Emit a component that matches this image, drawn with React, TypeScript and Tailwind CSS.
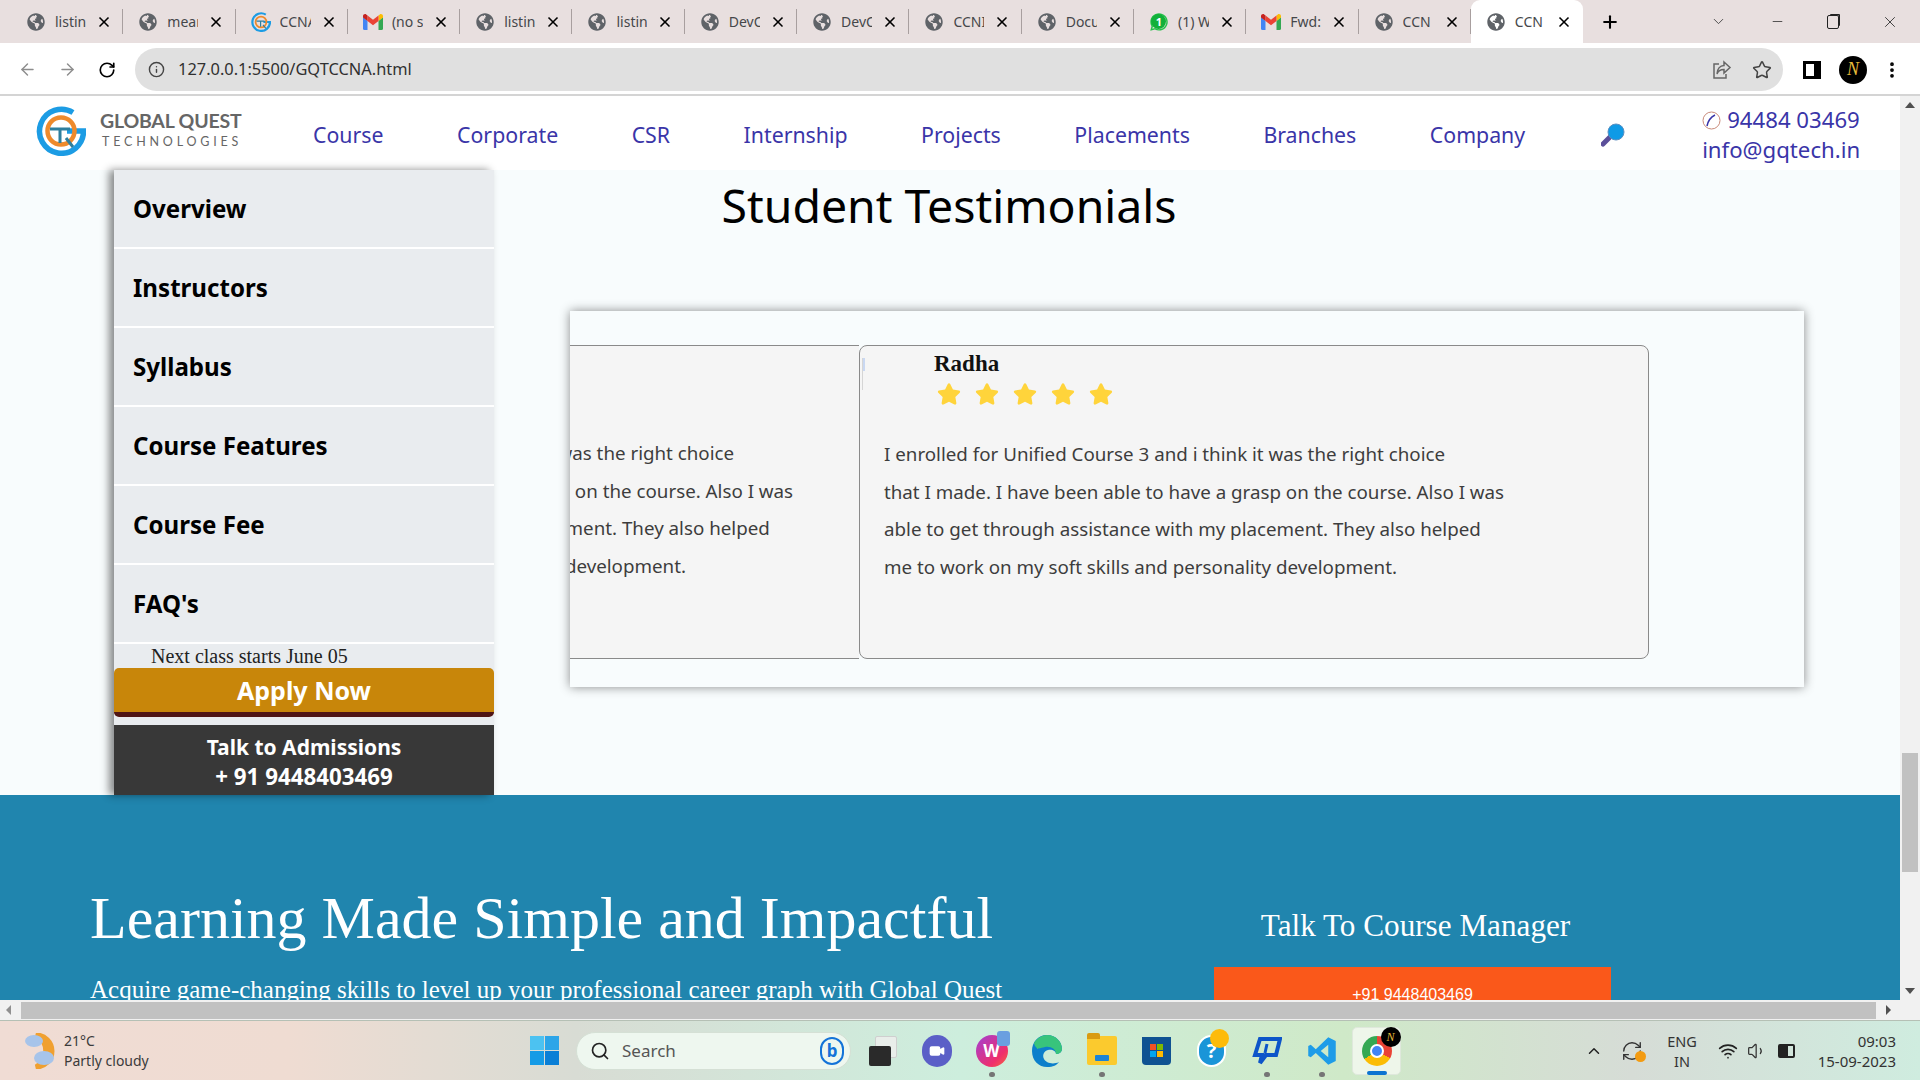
import { FaGlobeAmericas, FaStar, FaWhatsapp } from "react-icons/fa";
import { ArrowLeft, ArrowRight, RotateCw, Info, Star, ChevronDown, Minus, X, Plus, Search, Wifi, Volume1, ChevronUp, RefreshCw, MoreVertical, Video } from "lucide-react";
import { ReactNode } from "react";

const sans = "font-['Noto_Sans',sans-serif]";
const serif = "font-['Liberation_Serif',serif]";

type TTab = { title: string; icon?: "gq" | "gmail" | "wa"; active?: boolean };

const tabs: TTab[] = [
  { title: "listing" },
  { title: "mean" },
  { title: "CCNA", icon: "gq" },
  { title: "(no su", icon: "gmail" },
  { title: "listing" },
  { title: "listing" },
  { title: "DevO" },
  { title: "DevO" },
  { title: "CCNI" },
  { title: "Docu" },
  { title: "(1) W", icon: "wa" },
  { title: "Fwd:", icon: "gmail" },
  { title: "CCN" },
  { title: "CCN", active: true },
];

const menu = ["Overview", "Instructors", "Syllabus", "Course Features", "Course Fee", "FAQ's"];
const links = ["Course", "Corporate", "CSR", "Internship", "Projects", "Placements", "Branches", "Company"];
const lines = [
  "I enrolled for Unified Course 3 and i think it was the right choice",
  "that I made. I have been able to have a grasp on the course. Also I was",
  "able to get through assistance with my placement. They also helped",
  "me to work on my soft skills and personality development.",
];

function GqLogo({ size }: { size: number }) {
  return (
    <svg width={size} height={size} viewBox="0 0 50 50" fill="none">
      <path d="M37 6.500A22 22 0 1 0 47.500 25H31" stroke="#1c9ce4" strokeWidth="5.500" />
      <circle cx="25" cy="25" r="13.500" stroke="#ee8a2c" strokeWidth="4.500" />
      <path d="M14 23H34M24 23V37M30 32L37 41" stroke="#2f7f9e" strokeWidth="3" />
    </svg>
  );
}

function GmailIcon() {
  return (
    <svg width="20" height="16" viewBox="0 0 20 16">
      <path d="M0 3V14.500A1.500 1.500 0 0 0 1.500 16H4.500V7L0 3Z" fill="#4285f4" />
      <path d="M20 3V14.500A1.500 1.500 0 0 1 18.500 16H15.500V7L20 3Z" fill="#34a853" />
      <path d="M15.500 1.500V7L20 3.500V2C20 .5 18 -.5 16.800 .5L15.500 1.500Z" fill="#fbbc04" />
      <path d="M4.500 7V1.500L10 5.700L15.500 1.500V7L10 11.200L4.500 7Z" fill="#ea4335" />
      <path d="M0 3.500V2C0 .5 2 -.5 3.200 .5L4.500 1.500V7L0 3.500Z" fill="#c5221f" />
    </svg>
  );
}

function TabIcon({ icon }: { icon?: TTab["icon"] }) {
  if (icon === "gq") return <GqLogo size={20} />;
  if (icon === "gmail") return <GmailIcon />;
  if (icon === "wa")
    return (
      <span className="relative flex items-center justify-center w-5 h-5">
        <FaWhatsapp className="absolute w-5 h-5 text-[#25c34a]" />
        <span className="relative w-[15px] h-[15px] rounded-full bg-[#12b03a] text-white text-[11px] leading-[15px] text-center font-bold">1</span>
      </span>
    );
  return <FaGlobeAmericas className="w-[18px] h-[18px] text-[#5f6368]" />;
}

function Tab({ title, icon, active }: TTab) {
  return (
    <div className={`relative flex items-center w-[112.300px] pl-[15px] shrink-0 ${active ? "h-full bg-white rounded-t-[9px]" : "h-[25px] border-r border-[#a89f9f]"}`}>
      <span className="flex justify-center w-[20px] shrink-0">
        <TabIcon icon={icon} />
      </span>
      <span className="ml-[9px] w-[31px] overflow-hidden whitespace-nowrap text-[14px] text-[#45474a]">{title}</span>
      <X className="ml-[10px] w-[16px] h-[16px] text-black" strokeWidth={2.500} />
    </div>
  );
}

function Card({ first }: { first?: boolean }) {
  return (
    <div
      className={
        first
          ? "shrink-0 w-[711px] ml-[-422px] h-[314px] bg-[#f5f5f5] border-y border-[#8a8a8a] pl-[25px] pt-[88px]"
          : "relative shrink-0 w-[790px] h-[314px] bg-[#f5f5f5] border border-[#8a8a8a] rounded-[8px] pl-[24px]"
      }
    >
      {!first && (
        <div className="pl-[50px] pt-[4px] h-[89px]">
          <p className={`${serif} text-[23px] leading-[28px] font-bold text-[#111]`}>Radha</p>
          <div className="flex gap-[14px] mt-[4px] pl-[3px]">
            {[1, 2, 3, 4, 5].map((s) => (
              <FaStar key={s} className="w-[24px] h-[24px] text-[#ffd43b]" />
            ))}
          </div>
          <span className="absolute left-[2px] top-[12px] w-[3px] h-[32px] border-l border-[#d5d5d5] bg-[linear-gradient(#c9d8f2_40%,#f5f5f5_40%)]" />
        </div>
      )}
      {lines.map((l) => (
        <p key={l} className={`${sans} whitespace-nowrap text-[18.750px] leading-[37.700px] text-[#3d3d3d]`}>
          {l}
        </p>
      ))}
    </div>
  );
}

function Tray({ w, children }: { w: string; children: ReactNode }) {
  return <div className={`flex flex-col items-center justify-center shrink-0 ${w}`}>{children}</div>;
}

function App({ dot, active, children }: { dot?: boolean; active?: boolean; children: ReactNode }) {
  return (
    <div className="relative flex items-center justify-center w-[55px] h-[48px] shrink-0">
      {active && <span className="absolute left-[3px] w-[49px] h-[48px] rounded-[5px] bg-[#eef6ea] border border-[#dfe8dc]" />}
      <span className="relative">{children}</span>
      {dot && <span className="absolute bottom-[-2px] w-[6px] h-[5px] rounded-full bg-[#757575]" />}
      {active && <span className="absolute bottom-[0px] w-[20px] h-[4px] rounded-full bg-[#0b74d1]" />}
    </div>
  );
}

export default function Page() {
  return (
    <div className={`${sans} flex flex-col w-[1920px] h-screen overflow-hidden bg-white`}>
      {/* tab strip */}
      <div className="flex items-center h-[43px] bg-[#e8dfdf] pl-[11px] shrink-0">
        <div className="flex items-center h-full">
          {tabs.map((t, i) => (
            <Tab key={i} {...t} />
          ))}
        </div>
        <Plus className="ml-[17px] w-[20px] h-[20px] text-black" strokeWidth={2.500} />
        <ChevronDown className="ml-[90px] w-[17px] h-[17px] text-[#444]" strokeWidth={1.300} />
        <Minus className="ml-[43px] w-[15px] h-[15px] text-[#333]" strokeWidth={1.300} />
        <span className="ml-[42px] w-[12px] h-[14px] border border-[#222] rounded-[2px] shadow-[2px_-2px_0_-1px_#222]" />
        <X className="ml-[42px] w-[18px] h-[18px] text-[#333]" strokeWidth={1.200} />
      </div>

      {/* address bar */}
      <div className="flex items-center h-[53px] border-b-2 border-[#d4d4d4] pt-[2px] shrink-0">
        <ArrowLeft className="ml-[18px] w-[19px] h-[19px] text-[#8d8d8d]" strokeWidth={1.800} />
        <ArrowRight className="ml-[21px] w-[19px] h-[19px] text-[#8d8d8d]" strokeWidth={1.800} />
        <RotateCw className="ml-[21px] w-[18px] h-[18px] text-black" strokeWidth={2.200} />
        <div className="flex items-center ml-[19px] w-[1648px] h-[43px] rounded-full bg-[#e0e0e0] pl-[13px] shrink-0">
          <Info className="w-[17px] h-[17px] text-[#444]" strokeWidth={2} />
          <span className="ml-[13px] text-[16.400px] text-[#303030]">127.0.0.1:5500/GQTCCNA.html</span>
          <svg className="ml-auto" width="20" height="20" viewBox="0 0 20 20" fill="none" stroke="#666" strokeWidth="1.500">
            <path d="M7 4H2V18H14V14" />
            <path d="M12 2L18 7.500L12 13V9.500C8 9.500 6 11 5 14C5 9 8 5.500 12 5.500V2Z" />
          </svg>
          <Star className="ml-[20px] mr-[11px] w-[20px] h-[20px] text-[#444]" strokeWidth={1.800} />
        </div>
        <span className="ml-[20px] w-[18px] h-[18px] border-[3px] border-black border-r-[7px] bg-white" />
        <span className={`${serif} ml-[18px] flex items-center justify-center w-[28px] h-[28px] rounded-full bg-black text-[#e7bb3b] text-[18px] italic`}>N</span>
        <MoreVertical className="ml-[15px] w-[20px] h-[20px] text-black" strokeWidth={2.500} />
      </div>

      {/* page + vertical scrollbar */}
      <div className="flex flex-1 min-h-0">
        <div className="flex flex-col flex-1 min-w-0 overflow-hidden bg-[#f8fcfd]">
          <header className="flex items-center h-[74px] pt-[3px] shrink-0 bg-white">
            <div className="flex items-center ml-[36px] w-[277px] shrink-0 -mt-[7px]">
              <GqLogo size={50} />
              <div className="ml-[14px] mb-[4px] font-['Lato',sans-serif] text-[#666]">
                <p className="text-[19.500px] leading-[26px] font-bold tracking-[-0.2px]">GLOBAL QUEST</p>
                <p className="text-[12.500px] leading-[16px] tracking-[3.800px] ml-[2px] whitespace-nowrap">TECHNOLOGIES</p>
              </div>
            </div>
            <nav className="flex items-center gap-[73.500px] text-[21.300px] text-[#3a35a8]">
              {links.map((l) => (
                <a key={l}>{l}</a>
              ))}
            </nav>
            <svg className="ml-[76px] shrink-0" width="24" height="24" viewBox="0 0 24 24">
              <path d="M10 13L2 21" stroke="#5b4f9a" strokeWidth="5" strokeLinecap="round" />
              <circle cx="15" cy="9" r="8" fill="#0f9ae6" stroke="#5b8fc0" strokeWidth="1" />
            </svg>
            <div className="ml-[77px] mt-[1px] text-[#3a35a8] text-[22.200px] leading-[30px]">
              <p className="flex items-center whitespace-nowrap">
                <svg className="mr-[6px]" width="19" height="19" viewBox="0 0 19 19" fill="none">
                  <circle cx="9.500" cy="9.500" r="8.500" stroke="#c98a7a" strokeWidth="1" />
                  <path d="M13 4C9 6 6 10 5 15" stroke="#3a35a8" strokeWidth="1.500" />
                </svg>
                94484 03469
              </p>
              <p>info@gqtech.in</p>
            </div>
          </header>

          <div className="flex h-[625px] shrink-0">
            <aside className="relative z-10 ml-[114px] w-[380px] shrink-0 bg-[#e9ecef] shadow-[-5px_0_8px_rgba(0,0,0,0.45)] flex flex-col">
              {menu.map((m) => (
                <div key={m} className="flex items-center h-[79px] pl-[19px] pt-[2px] border-b-2 border-white text-[24.100px] font-bold text-black shrink-0">
                  {m}
                </div>
              ))}
              <p className={`${serif} h-[24px] pl-[37px] text-[20px] leading-[24px] text-[#222] whitespace-nowrap`}>Next class starts June 05</p>
              <button className="h-[49px] pt-[2px] shrink-0 rounded-[5px] bg-[#c8860a] border-b-[5px] border-[#4f1515] text-[25px] font-bold text-white">Apply Now</button>
              <div className="mt-[8px] flex-1 bg-[#383838] text-center text-white leading-[30px] font-bold pt-[7px]">
                <p className="text-[21px]">Talk to Admissions</p>
                <p className="text-[22.300px]">+ 91 9448403469</p>
              </div>
            </aside>
            <section className="flex-1 min-w-0 pl-[76px]">
              <h2 className="w-[910px] -ml-[76px] mt-[4px] h-[137px] text-center text-[46.400px] leading-[62px] text-black">Student Testimonials</h2>
              <div className="flex w-[1234px] h-[376px] overflow-hidden bg-[#f8fcfd] pt-[34px] shadow-[0_0_10px_rgba(0,0,0,0.45)]">
                <Card first />
                <Card />
              </div>
            </section>
          </div>

          <footer className={`${serif} flex flex-1 bg-[#2085ae] text-white overflow-hidden`}>
            <div className="ml-[90px] w-[1124px] shrink-0 pt-[87px]">
              <h1 className="text-[60px] leading-[72px] whitespace-nowrap">Learning Made Simple and Impactful</h1>
              <p className="mt-[22px] text-[25px] leading-[28px] whitespace-nowrap">Acquire game-changing skills to level up your professional career graph with Global Quest</p>
            </div>
            <div className="w-[397px] shrink-0">
              <p className="pt-[111px] pl-[6px] h-[172px] text-center text-[31.200px] leading-[40px] whitespace-nowrap">Talk To Course Manager</p>
              <div className="h-[60px] bg-[#fa581a] pt-[18px] text-center font-['Liberation_Sans',sans-serif] text-[16px] leading-[20px]">+91 9448403469</div>
            </div>
          </footer>
        </div>
        <div className="flex flex-col items-center w-[20px] shrink-0 bg-[#f1f1f1]">
          <span className="mt-[6px] border-x-[5px] border-x-transparent border-b-[6px] border-b-[#505050]" />
          <span className="mt-[645px] w-[16px] h-[119px] bg-[#c1c1c1]" />
          <span className="mt-auto mb-[6px] border-x-[5px] border-x-transparent border-t-[6px] border-t-[#505050]" />
        </div>
      </div>

      {/* horizontal scrollbar */}
      <div className="flex items-center h-[20px] shrink-0 bg-[#f1f1f1]">
        <span className="ml-[6px] border-y-[5px] border-y-transparent border-r-[5px] border-r-[#909090]" />
        <span className="ml-[10px] w-[1855px] h-[17px] bg-[#c1c1c1]" />
        <span className="ml-[10px] border-y-[5px] border-y-transparent border-l-[5px] border-l-[#505050]" />
      </div>

      {/* taskbar */}
      <div className="flex items-center h-[60px] shrink-0 border-t border-[#b5c0b5] bg-[linear-gradient(90deg,#f0dcd4_0%,#efdcd2_15%,#d8dcd4_30%,#cdeedd_50%,#cfe9c8_70%,#d6dcd6_85%,#cfecdf_100%)]">
        <svg className="ml-[24px] shrink-0" width="32" height="36" viewBox="0 0 32 36">
          <path d="M12 2A16 16 0 0 1 12 34A18 18 0 0 0 12 2Z" fill="#f0a030" stroke="#f0a030" strokeWidth="5" />
          <ellipse cx="10" cy="8" rx="9" ry="6" fill="#a7c4ea" />
          <ellipse cx="20" cy="25" rx="10" ry="7" fill="#a7c4ea" />
        </svg>
        <div className="ml-[8px] w-[90px] text-[14px] leading-[20px] text-[#3b3b3b]">
          <p>21°C</p>
          <p className="whitespace-nowrap">Partly cloudy</p>
        </div>
        <div className="ml-[376px] grid grid-cols-2 gap-[1px] w-[29px] h-[29px] shrink-0">
          <span className="bg-[#4cc2f1]" />
          <span className="bg-[#2ca5e8]" />
          <span className="bg-[#159be6]" />
          <span className="bg-[#0a7fd6]" />
        </div>
        <div className="ml-[17px] flex items-center w-[275px] h-[38px] rounded-full bg-[#eef7ef] border border-[#d5e0d5] pl-[13px] shrink-0">
          <Search className="w-[20px] h-[20px] text-[#222]" strokeWidth={2} />
          <span className="ml-[12px] text-[17px] text-[#555]">Search</span>
          <span className="ml-auto mr-[6px] flex items-center justify-center w-[24px] h-[28px] rounded-full border-2 border-[#1473d8] text-[17px] font-bold text-[#1473d8]">b</span>
        </div>
        <div className="ml-[3px] flex items-center">
          <App>
            <span className="relative block w-[30px] h-[30px]">
              <span className="absolute right-0 top-0 w-[22px] h-[22px] rounded-[2px] bg-[#e9eeea] border border-[#cfcfcf]" />
              <span className="absolute left-[2px] bottom-0 w-[22px] h-[20px] rounded-[2px] bg-[#2a2a2a]" />
            </span>
          </App>
          <App>
            <span className="flex items-center justify-center w-[30px] h-[32px] rounded-full bg-[#5b5fc7]">
              <Video className="w-[16px] h-[16px] text-white" fill="white" />
            </span>
          </App>
          <App dot>
            <span className="relative flex items-center justify-center w-[32px] h-[32px] rounded-full bg-[linear-gradient(135deg,#a13fd6,#ef2f6c_70%,#f56a3c)] text-white font-bold text-[17px]">
              W
              <span className="absolute -right-[2px] -top-[4px] w-[13px] h-[15px] rounded-[3px] bg-[#6a9fe0]" />
            </span>
          </App>
          <App>
            <svg width="32" height="34" viewBox="0 0 32 34" fill="none">
              <path d="M16 1C7 1 1 8 1 17C1 27 8 33 16 33C22 33 26 31 28 28C22 31 15 29 13 25C11 21 13 17 17 16C21 15 25 17 25 20C28 20 31 18 31 15C31 8 25 1 16 1Z" fill="#0c7fcb" />
              <path d="M16 1C25 1 31 8 31 15C31 18 28 20 25 20C25 15 20 12 14 13C9 14 5 17 3 9C6 4 11 1 16 1Z" fill="#38c47c" />
            </svg>
          </App>
          <App dot>
            <span className="relative block w-[30px] h-[29px] rounded-[2px] bg-[#fbca2e]">
              <span className="absolute top-[-3px] left-0 w-[13px] h-[6px] rounded-t-[2px] bg-[#d99b12]" />
              <span className="absolute bottom-[4px] left-[8px] w-[14px] h-[6px] rounded-[1px] bg-[#1c83d6]" />
            </span>
          </App>
          <App>
            <span className="flex items-center justify-center w-[29px] h-[28px] rounded-b-[4px] bg-[#0f5292]">
              <span className="grid grid-cols-2 gap-[1px] w-[13px] h-[13px]">
                <span className="bg-[#f25022]" />
                <span className="bg-[#7fba00]" />
                <span className="bg-[#00a4ef]" />
                <span className="bg-[#ffb900]" />
              </span>
            </span>
          </App>
          <App>
            <span className="relative flex items-center justify-center w-[29px] h-[32px] rounded-full bg-[#1a95d8] border-2 border-white text-white font-bold text-[20px]">
              ?
              <span className="absolute -right-[5px] -top-[8px] w-[19px] h-[19px] rounded-full bg-[#fdbb0a]" />
            </span>
          </App>
          <App dot>
            <svg width="30" height="30" viewBox="0 0 30 30" fill="none">
              <path d="M8 3H28L24 19H14L8 27L10 19H3L8 3Z" stroke="#0d55c9" strokeWidth="4" />
              <path d="M15 8L13 17" stroke="#0d55c9" strokeWidth="3" />
            </svg>
          </App>
          <App dot>
            <svg width="30" height="30" viewBox="0 0 24 24">
              <path d="M17 1L23 4V20L17 23L7 13.500L3 17L1 16V8L3 7L7 10.500L17 1ZM17 7L11 12L17 17V7Z" fill="#1e9ce8" />
            </svg>
          </App>
          <App active>
            <span className="relative block">
              <span className="flex items-center justify-center w-[30px] h-[30px] rounded-full bg-[conic-gradient(#ea4335_0_33%,#fbbc04_33%_66%,#34a853_66%)]">
                <span className="w-[14px] h-[14px] rounded-full bg-[#4285f4] border-2 border-white" />
              </span>
              <span className={`${serif} absolute -right-[9px] -top-[9px] flex items-center justify-center w-[20px] h-[20px] rounded-full bg-black text-[#e7bb3b] text-[12px] italic`}>N</span>
            </span>
          </App>
        </div>
        <ChevronUp className="ml-[181px] w-[18px] h-[18px] text-[#222]" strokeWidth={2} />
        <span className="relative ml-[18px] shrink-0">
          <RefreshCw className="w-[22px] h-[22px] text-[#333]" strokeWidth={1.500} />
          <span className="absolute right-[-3px] bottom-0 w-[11px] h-[11px] rounded-full bg-[#f39b12]" />
        </span>
        <Tray w="ml-[14px] w-[50px]">
          <span className="text-[14.500px] leading-[20px] text-[#333]">ENG</span>
          <span className="text-[14.500px] leading-[20px] text-[#333]">IN</span>
        </Tray>
        <Wifi className="ml-[11px] w-[20px] h-[20px] text-[#222]" strokeWidth={2} />
        <Volume1 className="ml-[9px] w-[20px] h-[20px] text-[#333]" strokeWidth={1.500} />
        <span className="ml-[11px] w-[17px] h-[14px] border-2 border-[#222] rounded-[2px] bg-[linear-gradient(90deg,#222_60%,transparent_60%)]" />
        <div className="ml-auto mr-[24px] text-right text-[15px] leading-[20px] text-[#333]">
          <p>09:03</p>
          <p>15-09-2023</p>
        </div>
      </div>
    </div>
  );
}
